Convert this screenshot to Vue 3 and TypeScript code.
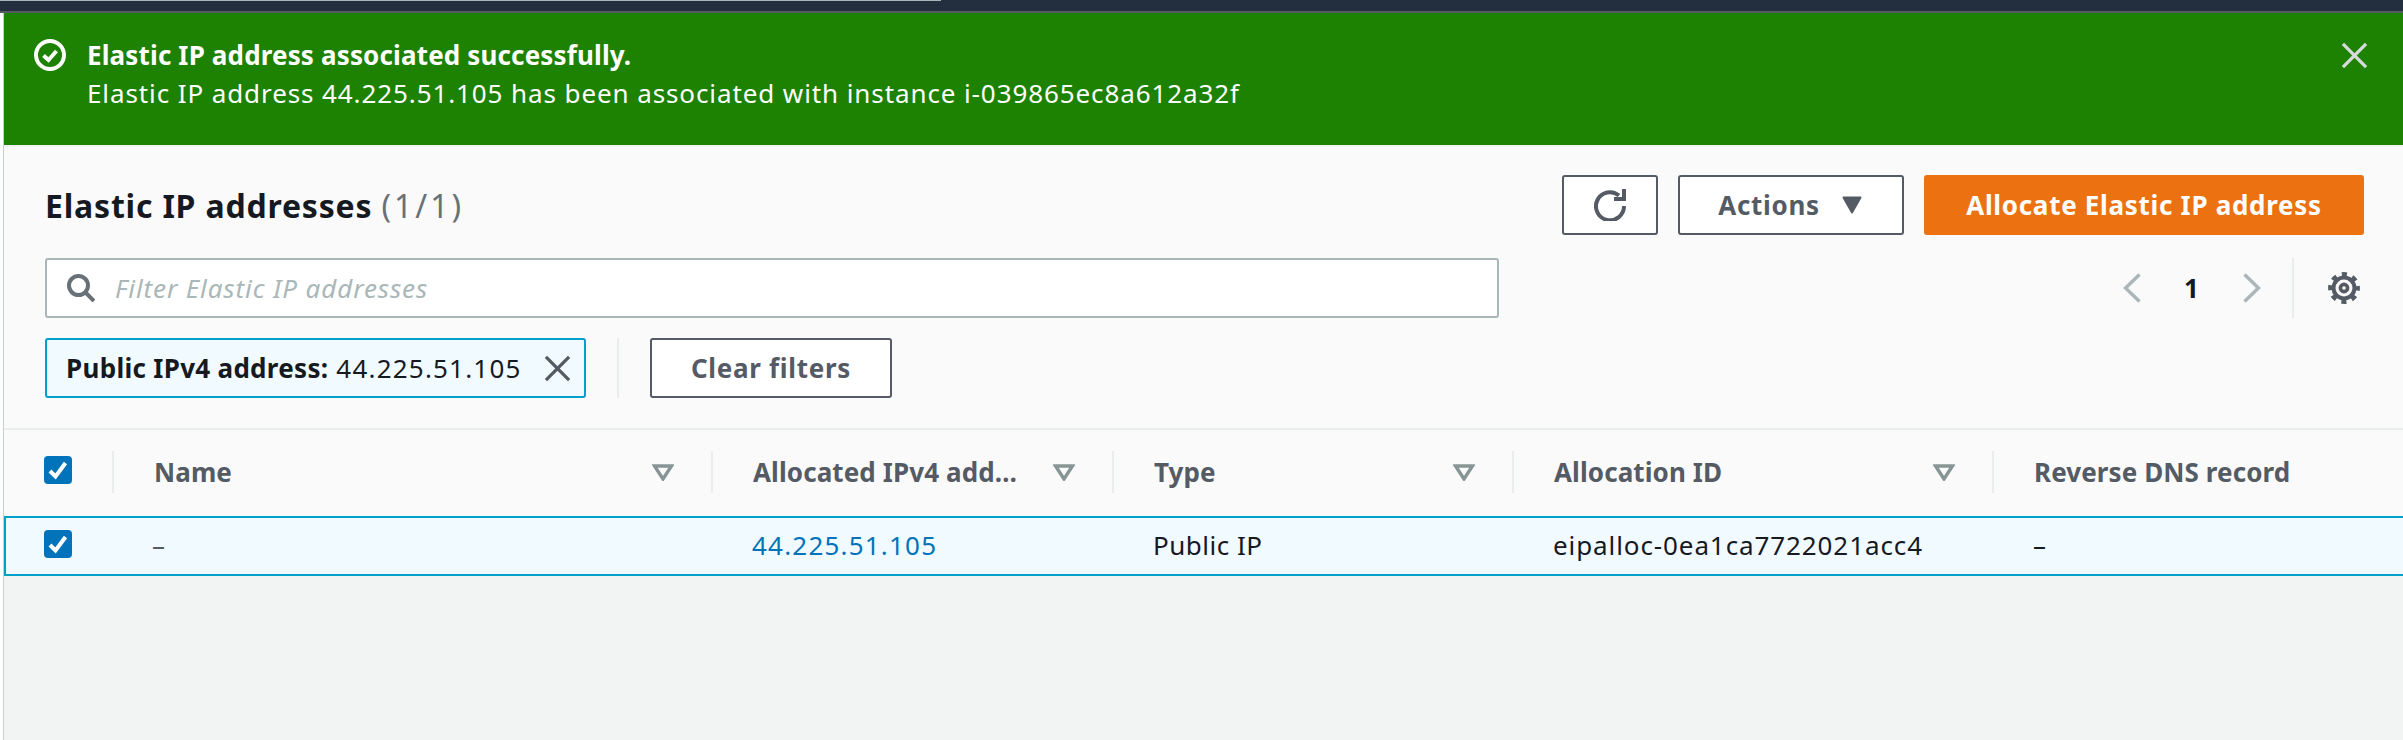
<template>
  <div class="page">
    <div class="topbar"><span class="topbar__line"></span></div>
    <div class="shell">
      <div class="flash">
        <svg class="flash__icon" viewBox="0 0 32 32">
          <circle cx="16" cy="16" r="14" />
          <path d="M9.5 16.5l5 4.5 8-9" />
        </svg>
        <div class="flash__text">
          <p class="flash__title">Elastic IP address associated successfully.</p>
          <p class="flash__desc">Elastic IP address 44.225.51.105 has been associated with instance i-039865ec8a612a32f</p>
        </div>
        <svg class="flash__close" viewBox="0 0 28 28">
          <path d="M2 2l24 24M26 2L2 26" />
        </svg>
      </div>

      <section class="panel">
        <header class="panel__head">
          <h1 class="panel__title">Elastic IP addresses <span class="panel__count">(1/1)</span></h1>
          <div class="panel__actions">
            <button type="button" class="btn btn--icon">
              <svg class="refresh" viewBox="0 0 32 32">
                <path d="M25 6.5A14 14 0 1 0 30 17" />
                <path d="M30 0v10H20" />
              </svg>
            </button>
            <button type="button" class="btn btn--actions">
              Actions
              <svg class="caret" viewBox="0 0 20 18"><path d="M1.5 1.5h17L10 16.5z" /></svg>
            </button>
            <button type="button" class="btn btn--primary">Allocate Elastic IP address</button>
          </div>
        </header>

        <div class="filter-row">
          <label class="search">
            <svg class="search__icon" viewBox="0 0 28 28">
              <circle cx="11.5" cy="11.5" r="9.5" />
              <path d="M18 18l9 9" />
            </svg>
            <input class="search__input" placeholder="Filter Elastic IP addresses" />
          </label>
          <div class="pager">
            <svg class="chevron" viewBox="0 0 18 30"><path d="M16.5 1.5L2.5 15l14 13.5" /></svg>
            <span class="pager__num">1</span>
            <svg class="chevron" viewBox="0 0 18 30"><path d="M1.5 1.5L15.5 15l-14 13.5" /></svg>
            <span class="pager__sep"></span>
            <svg class="gear" viewBox="0 0 32 32">
              <circle class="gear__teeth" cx="16" cy="16" r="13.4" />
              <circle class="gear__ring" cx="16" cy="16" r="10.5" />
              <circle class="gear__hub" cx="16" cy="16" r="3.6" />
            </svg>
          </div>
        </div>

        <div class="token-row">
          <div class="token">
            <span class="token__text"><b>Public IPv4 address:</b> 44.225.51.105</span>
            <svg class="token__x" viewBox="0 0 28 28"><path d="M2 2l24 24M26 2L2 26" /></svg>
          </div>
          <span class="token-row__sep"></span>
          <button type="button" class="btn btn--clear">Clear filters</button>
        </div>
      </section>

      <div class="table">
        <div class="row row--head">
          <div class="cell cell--check"><span class="check"><svg viewBox="0 0 28 28"><path d="M6 15l5.5 5.5L21.5 7" /></svg></span></div>
          <div v-for="col in columns" :key="col.label" class="cell cell--head">
            <span class="cell__label">{{ col.label }}</span>
            <svg v-if="col.filter" class="filter" viewBox="0 0 22 17"><path d="M2.5 2h17L11 15z" /></svg>
          </div>
        </div>
        <div class="row row--selected">
          <div class="cell cell--check"><span class="check"><svg viewBox="0 0 28 28"><path d="M6 15l5.5 5.5L21.5 7" /></svg></span></div>
          <div class="cell cell--muted">–</div>
          <div class="cell"><a class="link">44.225.51.105</a></div>
          <div class="cell cell--tight">Public IP</div>
          <div class="cell">eipalloc-0ea1ca7722021acc4</div>
          <div class="cell">–</div>
        </div>
      </div>
    </div>
  </div>
</template>

<script setup lang="ts">
const columns = [
  { label: 'Name', filter: true },
  { label: 'Allocated IPv4 address', filter: true },
  { label: 'Type', filter: true },
  { label: 'Allocation ID', filter: true },
  { label: 'Reverse DNS record', filter: false },
]
</script>

<style>
body {
  background: #fff;
}
</style>

<style scoped>
.page {
  height: 740px;
  overflow: hidden;
  display: flex;
  flex-direction: column;
  font-family: "Noto Sans", "Open Sans", sans-serif;
  font-size: 26px;
  letter-spacing: 0.9px;
  color: #16191f;
}

.topbar {
  height: 11px;
  flex: none;
  background: #232f3e;
  border-bottom: 2px solid #545b64;
}

.topbar__line {
  display: block;
  width: 941px;
  height: 1px;
  background: #aab7b8;
}

.shell {
  flex: 1;
  margin-left: 3px;
  border-left: 1px solid #c8cfcf;
  background: #f2f3f3;
}

.flash {
  height: 132px;
  display: flex;
  align-items: flex-start;
  padding: 23px 35px 0 30px;
  box-sizing: border-box;
  background: #1d8102;
  color: #fff;
}

.flash__icon {
  width: 32px;
  height: 32px;
  margin-top: 3px;
  flex: none;
  fill: none;
  stroke: #fff;
  stroke-width: 4;
}

.flash__text {
  flex: 1;
  margin-left: 21px;
}

.flash__title,
.flash__desc {
  margin: 0;
  line-height: 38px;
}

.flash__title {
  font-weight: 700;
  letter-spacing: 0.15px;
}

.flash__close {
  width: 27px;
  height: 27px;
  margin-top: 6px;
  fill: none;
  stroke: #d5dbdb;
  stroke-width: 3.4;
}

.panel {
  margin-top: 2px;
  height: 283px;
  padding: 28px 39px 0 41px;
  box-sizing: border-box;
  background: #fafafa;
  border-bottom: 2px solid #eaeded;
}

.panel__head {
  display: flex;
  align-items: center;
  justify-content: space-between;
}

.panel__title {
  margin: 0;
  font-size: 32px;
  font-weight: 700;
  letter-spacing: 0.8px;
}

.panel__count {
  font-weight: 400;
  letter-spacing: 3px;
  color: #687078;
}

.panel__actions {
  display: flex;
  gap: 20px;
}

.btn {
  display: flex;
  align-items: center;
  justify-content: center;
  box-sizing: border-box;
  height: 60px;
  background: #fff;
  border: 2px solid #545b64;
  border-radius: 3px;
  color: #545b64;
  font: inherit;
  font-weight: 700;
  letter-spacing: 0.7px;
}

.btn--icon {
  width: 96px;
}

.btn--actions {
  width: 226px;
  gap: 22px;
  padding-left: 4px;
}

.btn--primary {
  width: 440px;
  background: #ec7211;
  border-color: #ec7211;
  color: #fff;
}

.btn--clear {
  width: 242px;
}

.refresh {
  width: 32px;
  height: 32px;
  fill: none;
  stroke: #545b64;
  stroke-width: 4;
}

.caret {
  width: 20px;
  height: 18px;
  fill: #545b64;
  stroke: #545b64;
  stroke-width: 2;
  stroke-linejoin: round;
}

.filter-row {
  display: flex;
  align-items: center;
  margin-top: 23px;
}

.search {
  width: 1454px;
  height: 60px;
  box-sizing: border-box;
  display: flex;
  align-items: center;
  gap: 20px;
  padding: 0 20px;
  background: #fff;
  border: 2px solid #aab7b8;
  border-radius: 3px;
}

.search__icon {
  width: 28px;
  height: 28px;
  flex: none;
  fill: none;
  stroke: #687078;
  stroke-width: 4;
}

.search__input {
  flex: 1;
  border: 0;
  outline: 0;
  padding: 0;
  background: transparent;
  font: inherit;
  letter-spacing: inherit;
  color: #16191f;
}

.search__input::placeholder {
  color: #aab7b8;
  font-style: italic;
  opacity: 1;
}

.pager {
  display: flex;
  align-items: center;
  margin-left: auto;
  margin-right: 4px;
}

.chevron {
  width: 18px;
  height: 30px;
  fill: none;
  stroke: #aab7b8;
  stroke-width: 3.4;
}

.pager__num {
  width: 102px;
  text-align: center;
  font-weight: 700;
}

.pager__sep {
  width: 2px;
  height: 60px;
  margin: 0 34px 0 31px;
  background: #eaeded;
}

.gear {
  width: 32px;
  height: 32px;
  fill: none;
  stroke: #545b64;
}

.gear__teeth {
  stroke-width: 5;
  stroke-dasharray: 5 5.52;
  stroke-dashoffset: 2.5;
}

.gear__ring {
  stroke-width: 4;
}

.gear__hub {
  stroke-width: 3.6;
}

.token-row {
  display: flex;
  align-items: center;
  margin-top: 20px;
}

.token {
  width: 541px;
  height: 60px;
  box-sizing: border-box;
  display: flex;
  align-items: center;
  justify-content: space-between;
  padding: 0 13px 0 19px;
  background: #f1faff;
  border: 2px solid #00a1c9;
  border-radius: 3px;
}

.token__text {
  white-space: nowrap;
  letter-spacing: 1.2px;
}

.token__text b {
  letter-spacing: 0.3px;
}

.token__x {
  width: 27px;
  height: 27px;
  flex: none;
  fill: none;
  stroke: #545b64;
  stroke-width: 3.4;
}

.token-row__sep {
  width: 2px;
  height: 60px;
  margin: 0 31px;
  background: #eaeded;
}

.row {
  display: grid;
  grid-template-columns: 109px 599px 401px 400px 480px 1fr;
  box-sizing: border-box;
}

.row--head {
  height: 86px;
  background: #fafafa;
  color: #545b64;
  font-weight: 700;
  letter-spacing: 0.1px;
}

.row--selected {
  height: 60px;
  grid-template-columns: 107px 599px 401px 400px 480px 1fr;
  background: #f1faff;
  border: 2px solid #00a1c9;
  border-right: 0;
}

.cell {
  display: flex;
  align-items: center;
  min-width: 0;
  padding-left: 41px;
  padding-bottom: 2px;
}

.row--selected .cell {
  padding-left: 40px;
}

.row--selected .cell--muted {
  padding-left: 39px;
}

.cell--tight {
  letter-spacing: 0.5px;
}

.row .cell--check {
  align-items: flex-start;
  padding-left: 40px;
  padding-top: 26px;
}

.row--selected .cell--check {
  padding-left: 38px;
  padding-top: 12px;
}

.cell--head {
  position: relative;
  justify-content: space-between;
  padding-right: 38px;
}

.cell--head::before {
  content: "";
  position: absolute;
  left: -1px;
  top: 21px;
  width: 2px;
  height: 42px;
  background: #eaeded;
}

.cell__label {
  overflow: hidden;
  white-space: nowrap;
  text-overflow: ellipsis;
}

.cell--muted {
  color: #545b64;
}

.check {
  display: flex;
  width: 28px;
  height: 28px;
  background: #0073bb;
  border-radius: 4px;
}

.check svg {
  width: 28px;
  height: 28px;
  fill: none;
  stroke: #fff;
  stroke-width: 4;
}

.filter {
  width: 22px;
  height: 17px;
  flex: none;
  margin-left: 30px;
  fill: none;
  stroke: #879596;
  stroke-width: 3.4;
}

.link {
  color: #0073bb;
  letter-spacing: 1.2px;
}
</style>
